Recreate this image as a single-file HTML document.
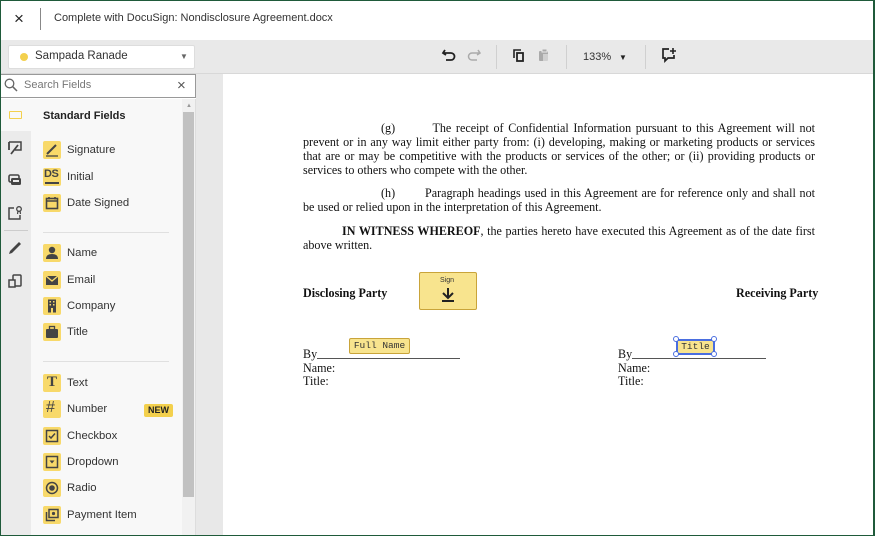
<!DOCTYPE html>
<html><head><meta charset="utf-8"><style>
*{margin:0;padding:0;box-sizing:border-box}
body{width:877px;height:536px;overflow:hidden;background:#fff;font-family:"Liberation Sans",Arial,sans-serif;position:relative}
.abs{position:absolute}
.frame{position:absolute;left:0;top:0;width:875px;height:536px;border:1px solid #1f5a3a;border-width:1px 2px 1px 1px;pointer-events:none;z-index:10}
.fi{position:absolute;left:43px;width:18px;height:18px;background:#f8d96a;border-radius:2px}
.fi svg{position:absolute;left:0;top:0}
.fl{position:absolute;left:67px;font-size:11.3px;color:#333}
.doc{position:absolute;font-family:"Liberation Serif","Times New Roman",serif;font-size:12.1px;color:#111;white-space:nowrap}
.j{left:303px;width:512px;text-align:justify;text-align-last:justify}
</style></head><body>
<div class="frame"></div>
<div class="abs" style="left:0;top:0;width:877px;height:40px;background:#fff"></div>
<div class="abs" style="left:14px;top:9px;font-size:17px;color:#222">×</div>
<div class="abs" style="left:40px;top:8px;width:1px;height:22px;background:#888"></div>
<div class="abs" style="left:54px;top:12px;font-size:11px;color:#333">Complete with DocuSign: Nondisclosure Agreement.docx</div>
<div class="abs" style="left:0;top:40px;width:875px;height:34px;background:#e9e9e9;border-bottom:1px solid #d8d8d8"></div>
<div class="abs" style="left:8px;top:45px;width:187px;height:24px;background:#fff;border:1px solid #ddd;border-radius:2px"></div>
<div class="abs" style="left:20px;top:53px;width:8px;height:8px;border-radius:50%;background:#f3d04d"></div>
<div class="abs" style="left:35px;top:50px;font-size:11.5px;color:#333">Sampada Ranade</div>
<div class="abs" style="left:180px;top:52px;font-size:8px;color:#666">▼</div>
<svg class="abs" style="left:441px;top:47px" width="16" height="16" viewBox="0 0 16 16"><path d="M4 3 L2 6 L5 8 M2.5 6 H10 a3.5 3.5 0 0 1 0 7 H5" fill="none" stroke="#222" stroke-width="1.8"/></svg>
<svg class="abs" style="left:466px;top:47px" width="16" height="16" viewBox="0 0 16 16"><path d="M12 3 L14 6 L11 8 M13.5 6 H6 a3.5 3.5 0 0 0 0 7 H11" fill="none" stroke="#aaa" stroke-width="1.5"/></svg>
<div class="abs" style="left:496px;top:45px;width:1px;height:24px;background:#d0d0d0"></div>
<svg class="abs" style="left:511px;top:47px" width="16" height="16" viewBox="0 0 16 16"><path d="M3 11 V3 H10" fill="none" stroke="#222" stroke-width="1.6"/><rect x="6" y="6" width="6" height="8" fill="none" stroke="#222" stroke-width="1.8"/></svg>
<svg class="abs" style="left:536px;top:47px" width="16" height="16" viewBox="0 0 16 16"><rect x="3" y="4" width="9" height="10" rx="1" fill="#aaa"/><rect x="6" y="2" width="5" height="3" fill="#aaa" stroke="#e9e9e9"/><rect x="7" y="7" width="5" height="7" fill="#e9e9e9" opacity=".6"/></svg>
<div class="abs" style="left:566px;top:45px;width:1px;height:24px;background:#d0d0d0"></div>
<div class="abs" style="left:583px;top:51px;font-size:11px;color:#333">133%</div>
<div class="abs" style="left:619px;top:53px;font-size:8px;color:#222">▼</div>
<div class="abs" style="left:645px;top:45px;width:1px;height:24px;background:#d0d0d0"></div>
<svg class="abs" style="left:660px;top:46px" width="18" height="18" viewBox="0 0 18 18"><path d="M9 3 H3 V12 H5 V15 L8 12 H14 V9" fill="none" stroke="#222" stroke-width="1.7"/><path d="M13 2 V8 M10 5 H16" stroke="#222" stroke-width="1.6"/></svg>
<div class="abs" style="left:0;top:74px;width:196px;height:24px;background:#fff;border:1px solid #999"></div>
<svg class="abs" style="left:4px;top:78px" width="14" height="14" viewBox="0 0 14 14"><circle cx="5.5" cy="5.5" r="4.3" fill="none" stroke="#666" stroke-width="1.3"/><path d="M8.7 8.7 L13 13" stroke="#666" stroke-width="1.5"/></svg>
<div class="abs" style="left:24px;top:79px;font-size:11px;color:#777">Search Fields</div>
<div class="abs" style="left:177px;top:77px;font-size:15px;color:#555">×</div>
<div class="abs" style="left:1px;top:99px;width:30px;height:437px;background:#ebebeb"></div>
<div class="abs" style="left:1px;top:99px;width:30px;height:32px;background:#f8f8f8"></div>
<div class="abs" style="left:9px;top:111px;width:13px;height:8px;border:1.5px solid #f3d04d;border-radius:1px"></div>
<svg class="abs" style="left:7px;top:140px" width="16" height="16" viewBox="0 0 16 16"><path d="M2 2 H14 V10 H8" fill="none" stroke="#444" stroke-width="1.5"/><path d="M2 2 V10 M4 14 L11 5" stroke="#444" stroke-width="1.8"/></svg>
<svg class="abs" style="left:7px;top:172px" width="16" height="16" viewBox="0 0 16 16"><rect x="2" y="3" width="10" height="7" rx="1.5" fill="none" stroke="#444" stroke-width="1.6"/><rect x="4" y="6" width="10" height="7" rx="1.5" fill="#444"/><rect x="6" y="8" width="6" height="2" fill="#ebebeb"/></svg>
<svg class="abs" style="left:7px;top:205px" width="16" height="16" viewBox="0 0 16 16"><path d="M7 3 H2 V14 H13 V10" fill="none" stroke="#444" stroke-width="1.5"/><circle cx="12" cy="4" r="2.3" fill="none" stroke="#444" stroke-width="1.3"/><path d="M11 6 L10.5 9 M13 6 L13.5 9" stroke="#444" stroke-width="1.2"/></svg>
<div class="abs" style="left:4px;top:230px;width:24px;height:1px;background:#ccc"></div>
<svg class="abs" style="left:7px;top:240px" width="16" height="16" viewBox="0 0 16 16"><path d="M2 14 L3 11 L12 2 L14 4 L5 13 Z" fill="#444"/></svg>
<svg class="abs" style="left:7px;top:273px" width="16" height="16" viewBox="0 0 16 16"><rect x="6" y="2" width="8" height="11" rx="1" fill="none" stroke="#444" stroke-width="1.5"/><rect x="2" y="7" width="6" height="7" fill="#ebebeb" stroke="#444" stroke-width="1.5"/></svg>
<div class="abs" style="left:31px;top:99px;width:151px;height:437px;background:#f8f8f8"></div>
<div class="abs" style="left:182px;top:99px;width:14px;height:437px;background:#f1f1f1;border-right:1px solid #ddd"></div>
<div class="abs" style="left:186px;top:103px;font-size:6px;color:#999">▲</div>
<div class="abs" style="left:183px;top:112px;width:11px;height:385px;background:#c1c1c1"></div>
<div class="abs" style="left:196px;top:74px;width:27px;height:462px;background:#e8e8e8"></div>
<div class="abs" style="left:43px;top:110px;font-size:11px;font-weight:bold;color:#222">Standard Fields</div>

<div class="fi" style="top:141px"><svg width="18" height="18"><path d="M4 13 L13 4" stroke="#444" stroke-width="2"/><path d="M3 15 H15" stroke="#444" stroke-width="1.3"/></svg></div><div class="fl" style="top:144px">Signature</div>
<div class="fi" style="top:168px"><div style="position:absolute;left:1px;top:0;font-size:11px;font-weight:bold;color:#444;letter-spacing:-0.5px">DS</div><div style="position:absolute;left:2px;top:14px;width:14px;height:1.5px;background:#444"></div></div><div class="fl" style="top:171px">Initial</div>
<div class="fi" style="top:194px"><svg width="18" height="18"><rect x="3.5" y="4.5" width="11" height="10" fill="none" stroke="#444" stroke-width="1.6"/><path d="M3.5 7 H14.5 M6 3 V5.5 M12 3 V5.5" stroke="#444" stroke-width="1.6"/></svg></div><div class="fl" style="top:197px">Date Signed</div>
<div class="abs" style="left:43px;top:232px;width:126px;height:1px;background:#e0e0e0"></div>
<div class="fi" style="top:244px"><svg width="18" height="18"><circle cx="9" cy="6" r="3.2" fill="#444"/><path d="M3 15 Q3 10 9 10 Q15 10 15 15 Z" fill="#444"/></svg></div><div class="fl" style="top:247px">Name</div>
<div class="fi" style="top:271px"><svg width="18" height="18"><rect x="3" y="5" width="12" height="9" fill="#444"/><path d="M3 5 L9 10 L15 5" fill="none" stroke="#f8d96a" stroke-width="1.4"/></svg></div><div class="fl" style="top:274px">Email</div>
<div class="fi" style="top:297px"><svg width="18" height="18"><rect x="5" y="2.5" width="8" height="13" fill="#444"/><g fill="#f8d96a"><rect x="6.5" y="4" width="1.5" height="1.5"/><rect x="10" y="4" width="1.5" height="1.5"/><rect x="6.5" y="7" width="1.5" height="1.5"/><rect x="10" y="7" width="1.5" height="1.5"/><rect x="8" y="11" width="2" height="4.5"/></g></svg></div><div class="fl" style="top:300px">Company</div>
<div class="fi" style="top:323px"><svg width="18" height="18"><rect x="3" y="6" width="12" height="9" rx="1" fill="#444"/><rect x="6.5" y="3.5" width="5" height="3" fill="none" stroke="#444" stroke-width="1.3"/></svg></div><div class="fl" style="top:326px">Title</div>
<div class="abs" style="left:43px;top:361px;width:126px;height:1px;background:#e0e0e0"></div>
<div class="fi" style="top:374px"><div style="position:absolute;left:4px;top:0;font-family:'Liberation Serif',serif;font-size:15px;font-weight:bold;color:#444">T</div></div><div class="fl" style="top:377px">Text</div>
<div class="fi" style="top:400px"><div style="position:absolute;left:3px;top:-1px;font-size:16px;color:#444">#</div></div><div class="fl" style="top:403px">Number</div>
<div class="abs" style="left:144px;top:404px;width:29px;height:13px;background:#f3d04d;border-radius:2px;font-size:9px;font-weight:bold;color:#222;text-align:center;line-height:13px">NEW</div>
<div class="fi" style="top:427px"><svg width="18" height="18"><rect x="3.5" y="3.5" width="11" height="11" fill="none" stroke="#444" stroke-width="1.5"/><path d="M6 9 L8 11 L12 6.5" fill="none" stroke="#444" stroke-width="1.5"/></svg></div><div class="fl" style="top:430px">Checkbox</div>
<div class="fi" style="top:453px"><svg width="18" height="18"><rect x="3.5" y="3.5" width="11" height="11" fill="none" stroke="#444" stroke-width="1.5"/><path d="M6.5 7.5 H11.5 L9 10.5 Z" fill="#444"/></svg></div><div class="fl" style="top:456px">Dropdown</div>
<div class="fi" style="top:479px"><svg width="18" height="18"><circle cx="9" cy="9" r="5.5" fill="none" stroke="#444" stroke-width="1.5"/><circle cx="9" cy="9" r="2.8" fill="#444"/></svg></div><div class="fl" style="top:482px">Radio</div>
<div class="fi" style="top:506px"><svg width="18" height="18"><rect x="6" y="3.5" width="9" height="8" fill="none" stroke="#444" stroke-width="1.5"/><circle cx="10.5" cy="7.5" r="1.6" fill="#444"/><path d="M3.5 6 V14.5 H12" fill="none" stroke="#444" stroke-width="1.5"/></svg></div><div class="fl" style="top:509px">Payment Item</div>

<div class="doc j" style="top:121px"><span style="padding-left:78px">(g)</span>&nbsp;&nbsp;&nbsp;&nbsp;&nbsp;&nbsp;&nbsp;&nbsp;The receipt of Confidential Information pursuant to this Agreement will not</div>
<div class="doc j" style="top:135px">prevent or in any way limit either party from: (i) developing, making or marketing products or services</div>
<div class="doc j" style="top:149px">that are or may be competitive with the products or services of the other; or (ii) providing products or</div>
<div class="doc" style="top:163px;left:303px">services to others who compete with the other.</div>
<div class="doc j" style="top:186px"><span style="padding-left:78px">(h)</span>&nbsp;&nbsp;&nbsp;&nbsp;&nbsp;&nbsp;&nbsp;&nbsp;Paragraph headings used in this Agreement are for reference only and shall not</div>
<div class="doc" style="top:200px;left:303px">be used or relied upon in the interpretation of this Agreement.</div>
<div class="doc j" style="top:224px"><span style="padding-left:39px"><b>IN WITNESS WHEREOF</b></span>, the parties hereto have executed this Agreement as of the date first</div>
<div class="doc" style="top:238px;left:303px">above written.</div>
<div class="doc" style="top:286px;left:303px;font-weight:bold">Disclosing Party</div>
<div class="doc" style="top:286px;left:736px;font-weight:bold">Receiving Party</div>
<div class="abs" style="left:419px;top:272px;width:58px;height:38px;background:#f8e48e;border:1px solid #c9a43a;border-radius:2px"></div>
<div class="abs" style="left:440px;top:277px;font-size:7px;color:#333">Sign</div>
<svg class="abs" style="left:439px;top:287px" width="18" height="16" viewBox="0 0 18 16"><path d="M9 1 V10 M4 6 L9 11 L14 6" fill="none" stroke="#222" stroke-width="2"/><path d="M3 14 H15" stroke="#222" stroke-width="2"/></svg>
<div class="doc" style="top:347px;left:303px">By</div>
<div class="abs" style="left:317px;top:358px;width:143px;height:1px;background:#555"></div>
<div class="doc" style="top:361px;left:303px">Name:</div>
<div class="doc" style="top:374px;left:303px">Title:</div>
<div class="abs" style="left:349px;top:338px;width:61px;height:16px;background:#f8e48e;border:1px solid #c9a43a;border-radius:2px;font-family:'Liberation Mono',monospace;font-size:9.5px;color:#333;text-align:center;line-height:14px">Full Name</div>
<div class="doc" style="top:347px;left:618px">By</div>
<div class="abs" style="left:632px;top:358px;width:134px;height:1px;background:#555"></div>
<div class="doc" style="top:361px;left:618px">Name:</div>
<div class="doc" style="top:374px;left:618px">Title:</div>
<div class="abs" style="left:676px;top:339px;width:39px;height:16px;background:#f8e48e;border:2px solid #4a6ee0;font-family:'Liberation Mono',monospace;font-size:9.5px;color:#333;text-align:center;line-height:12px">Title</div>
<div class="abs" style="left:673px;top:336px;width:6px;height:6px;border-radius:50%;background:#fff;border:1.5px solid #4a6ee0"></div>
<div class="abs" style="left:711px;top:336px;width:6px;height:6px;border-radius:50%;background:#fff;border:1.5px solid #4a6ee0"></div>
<div class="abs" style="left:673px;top:351px;width:6px;height:6px;border-radius:50%;background:#fff;border:1.5px solid #4a6ee0"></div>
<div class="abs" style="left:711px;top:351px;width:6px;height:6px;border-radius:50%;background:#fff;border:1.5px solid #4a6ee0"></div>
</body></html>
